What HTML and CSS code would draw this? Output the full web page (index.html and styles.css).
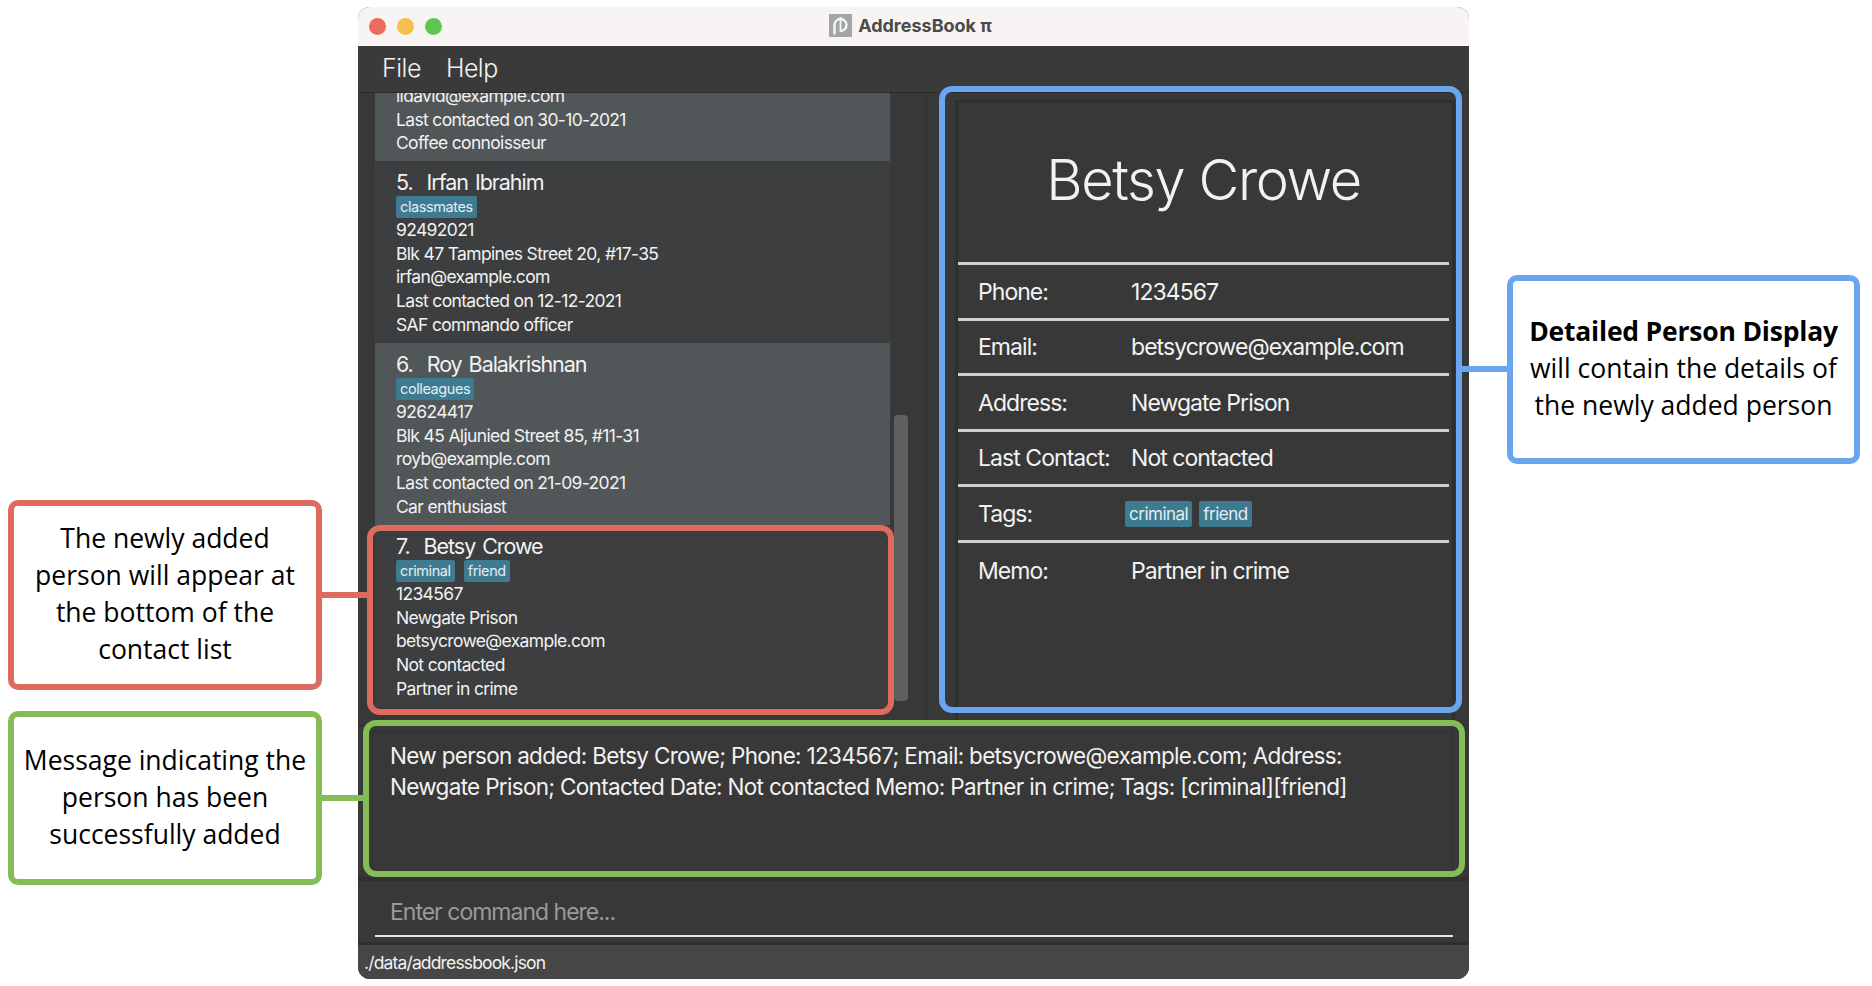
FILE: index.html
```html
<!DOCTYPE html>
<html>
<head>
	<meta charset="UTF-8">
	<title>AddressBook</title>
	<link rel="stylesheet" href="styles.css">
</head>
<body>
	<div id="stage">
		<div id="window">
			<div class="title_bar">
				<div class="lights">
					<span class="light red"></span>
					<span class="light yellow"></span>
					<span class="light green"></span>
				</div>
				<div class="title">
					<svg class="app_icon" width="23" height="23" viewBox="0 0 23 23">
						<rect width="23" height="23" fill="#a3a6a8"/>
						<path d="M5.5 20.5 V11 A6 6 0 1 1 11.5 17" fill="none" stroke="#f6f6f6" stroke-width="2.4"/>
						<rect x="10.6" y="3" width="1.8" height="15" fill="#f6f6f6"/>
					</svg>
					<span>AddressBook π</span>
				</div>
			</div>
			<div class="menu_bar">
				<span>File</span>
				<span>Help</span>
			</div>
			<div class="main">
				<div class="list_pane">
					<div class="list">
						<div class="card odd first">
							<p>lidavid@example.com</p>
							<p>Last contacted on 30-10-2021</p>
							<p>Coffee connoisseur</p>
						</div>
						<div class="card">
							<h3>5.&nbsp; Irfan Ibrahim</h3>
							<div class="tags"><span>classmates</span></div>
							<p>92492021</p>
							<p>Blk 47 Tampines Street 20, #17-35</p>
							<p>irfan@example.com</p>
							<p>Last contacted on 12-12-2021</p>
							<p>SAF commando officer</p>
						</div>
						<div class="card odd">
							<h3>6.&nbsp; Roy Balakrishnan</h3>
							<div class="tags"><span>colleagues</span></div>
							<p>92624417</p>
							<p>Blk 45 Aljunied Street 85, #11-31</p>
							<p>royb@example.com</p>
							<p>Last contacted on 21-09-2021</p>
							<p>Car enthusiast</p>
						</div>
						<div class="card">
							<h3>7.&nbsp; Betsy Crowe</h3>
							<div class="tags"><span>criminal</span><span>friend</span></div>
							<p>1234567</p>
							<p>Newgate Prison</p>
							<p>betsycrowe@example.com</p>
							<p>Not contacted</p>
							<p>Partner in crime</p>
						</div>
					</div>
					<div class="scroll_track"><div class="scroll_thumb"></div></div>
				</div>
				<div class="detail_pane">
					<div class="detail">
						<h1>Betsy Crowe</h1>
						<div class="row"><label>Phone:</label><span>1234567</span></div>
						<div class="row"><label>Email:</label><span>betsycrowe@example.com</span></div>
						<div class="row"><label>Address:</label><span>Newgate Prison</span></div>
						<div class="row"><label>Last Contact:</label><span>Not contacted</span></div>
						<div class="row"><label>Tags:</label><div class="tags big"><span>criminal</span><span>friend</span></div></div>
						<div class="row"><label>Memo:</label><span>Partner in crime</span></div>
					</div>
				</div>
			</div>
			<div class="result_pane">
				<div class="result">New person added: Betsy Crowe; Phone: 1234567; Email: betsycrowe@example.com; Address:<br>Newgate Prison; Contacted Date: Not contacted Memo: Partner in crime; Tags: [criminal][friend]</div>
			</div>
			<div class="command_pane">
				<div class="command">Enter command here...</div>
			</div>
			<div class="status_bar">./data/addressbook.json</div>
		</div>

		<!-- annotations on top of the window -->
		<div class="mark mark_red"></div>
		<div class="mark mark_blue"></div>
		<div class="mark mark_green"></div>
		<div class="link link_red"></div>
		<div class="link link_blue"></div>
		<div class="link link_green"></div>
		<div class="note note_red"><p>The newly added<br>person will appear at<br>the bottom of the<br>contact list</p></div>
		<div class="note note_green"><p>Message indicating the<br>person has been<br>successfully added</p></div>
		<div class="note note_blue"><p><b>Detailed Person Display</b><br>will contain the details of<br>the newly added person</p></div>
	</div>
</body>
</html>
```

FILE: styles.css
```css
* {
	padding: 0;
	margin: 0;
	box-sizing: border-box;
}

html,
body {
	height: 100%;
	background: white;
	overflow: hidden;
}

#stage {
	position: relative;
	width: 1872px;
	height: 986px;
	padding: 7px 0 0 358px;
	font-family: "Inter", "Liberation Sans", sans-serif;
}

#window {
	width: 1111px;
	height: 972px;
	display: flex;
	flex-direction: column;
	background: #383838;
	border-radius: 12px;
	overflow: hidden;
	color: #f2f2f2;
}

/* title bar */
.title_bar {
	height: 39px;
	flex: none;
	display: flex;
	align-items: center;
	position: relative;
	background: #f8f4f4;
	color: #4a4a4a;
}

.lights {
	display: flex;
	gap: 11px;
	padding-left: 11px;
}

.light {
	width: 17px;
	height: 17px;
	border-radius: 50%;
}

.light.red { background: #ec6a5e; }
.light.yellow { background: #f5bf4f; }
.light.green { background: #61c554; }

.title {
	position: absolute;
	left: 0;
	right: 0;
	top: 0;
	bottom: 0;
	display: flex;
	align-items: center;
	justify-content: center;
	gap: 6px;
	padding: 0 6px 2px 0;
	font-size: 18px;
	font-weight: 700;
}

/* menu */
.menu_bar {
	height: 47px;
	flex: none;
	display: flex;
	align-items: center;
	gap: 25px;
	padding: 0 0 2px 24px;
	font-size: 25px;
	letter-spacing: -0.5px;
	background: #3a3a3a;
	border-bottom: 1px solid #2c2c2c;
	font-weight: 300;
}

/* list + detail */
.main {
	height: 632px;
	flex: none;
	display: flex;
}

.list_pane {
	width: 569px;
	flex: none;
	display: flex;
	padding-left: 17px;
	border-right: 1px solid #2e2e2e;
	overflow: hidden;
}

.list {
	width: 515px;
	flex: none;
}

.card {
	height: 182px;
	padding: 7px 0 0 21px;
	background: #3c3e3f;
	font-size: 17.5px;
	line-height: 23.7px;
	letter-spacing: -0.66px;
	white-space: nowrap;
}

.card.odd {
	background: #515658;
}

.card.first {
	height: 68px;
	padding-top: 0;
	overflow: hidden;
}

.card.first p:first-child {
	margin-top: -9px;
}

.card h3 {
	font-size: 21.5px;
	font-weight: 400;
	line-height: 28px;
	letter-spacing: -1.05px;
	word-spacing: 2px;
}

.tags {
	display: flex;
	gap: 9px;
	height: 22px;
}

.tags span {
	padding: 0 4px;
	background: #3e7b91;
	border-radius: 2px;
	font-size: 14.5px;
	line-height: 22px;
	letter-spacing: -0.4px;
	color: #e4eef2;
}

.scroll_track {
	width: 36px;
	padding: 322px 0 0 4px;
}

.scroll_thumb {
	width: 14px;
	height: 286px;
	border-radius: 4px;
	background: #5f5f5f;
}

.detail_pane {
	flex: 1;
	padding: 7px 14px 0 28px;
}

.detail {
	height: 620px;
	padding-right: 3px;
	border: 3px solid #2f2f2f;
	border-bottom: none;
}

.detail h1 {
	height: 162px;
	border-bottom: 3px solid #d0d0d0;
	text-align: center;
	font-size: 56px;
	font-weight: 300;
	line-height: 155px;
	letter-spacing: -1.4px;
	white-space: nowrap;
}

.row {
	height: 55.5px;
	display: flex;
	align-items: center;
	padding: 1px 0 0 20px;
	border-bottom: 3px solid #d0d0d0;
	font-size: 23px;
	letter-spacing: -0.95px;
}

.row:last-child {
	border-bottom: none;
}

.row label {
	width: 153px;
	flex: none;
	white-space: nowrap;
}

.tags.big {
	margin-left: -6px;
	height: 26px;
	gap: 7px;
}

.tags.big span {
	font-size: 17px;
	line-height: 26px;
	letter-spacing: -0.5px;
}

/* result */
.result_pane {
	height: 152px;
	flex: none;
	padding: 5px 16px 0 14px;
	border-top: 1px solid #2e2e2e;
}

.result {
	height: 142px;
	padding: 9px 17px;
	border: 1px solid #2f2f2f;
	font-size: 22.5px;
	line-height: 30.5px;
	letter-spacing: -0.69px;
	white-space: nowrap;
}

/* command */
.command_pane {
	height: 68px;
	flex: none;
	padding: 0 16px 0 17px;
	border-top: 4px solid #2f2f2f;
	border-bottom: 3px solid #2f2f2f;
}

.command {
	height: 56px;
	padding: 16px 15px 0;
	border-bottom: 2px solid #e8e8e8;
	font-size: 23px;
	line-height: 30px;
	letter-spacing: -1px;
	color: #9a9a9a;
}

.status_bar {
	flex: 1;
	padding: 7px 6px 0;
	background: #464646;
	font-size: 17.5px;
	letter-spacing: -0.85px;
	white-space: nowrap;
}

/* annotations */
.mark {
	position: absolute;
	border-style: solid;
	border-width: 6px;
	border-radius: 13px;
}

.mark_red { left: 367px; top: 525px; width: 527px; height: 190px; border-color: #dd6b5f; }
.mark_blue { left: 939px; top: 86px; width: 523px; height: 627px; border-color: #6aa5f0; }
.mark_green { left: 363px; top: 720px; width: 1102px; height: 157px; border-color: #84bc56; }

.link {
	position: absolute;
	height: 6px;
}

.link_red { left: 320px; top: 592px; width: 47px; background: #dd6b5f; }
.link_blue { left: 1462px; top: 366px; width: 47px; background: #6aa5f0; }
.link_green { left: 320px; top: 795px; width: 43px; background: #84bc56; }

.note {
	position: absolute;
	display: flex;
	align-items: center;
	justify-content: center;
	text-align: center;
	padding-bottom: 2px;
	background: white;
	border-style: solid;
	border-width: 6px;
	border-radius: 10px;
	color: black;
	font-family: "Open Sans", "Liberation Sans", sans-serif;
	font-size: 26.5px;
	line-height: 37px;
	white-space: nowrap;
}

.note b {
	font-weight: 700;
	letter-spacing: -0.2px;
}

.note_red { left: 8px; top: 500px; width: 314px; height: 190px; border-color: #dd6b5f; }
.note_green { left: 8px; top: 711px; width: 314px; height: 174px; border-color: #84bc56; }
.note_blue { left: 1507px; top: 275px; width: 353px; height: 189px; border-color: #6aa5f0; }
```
